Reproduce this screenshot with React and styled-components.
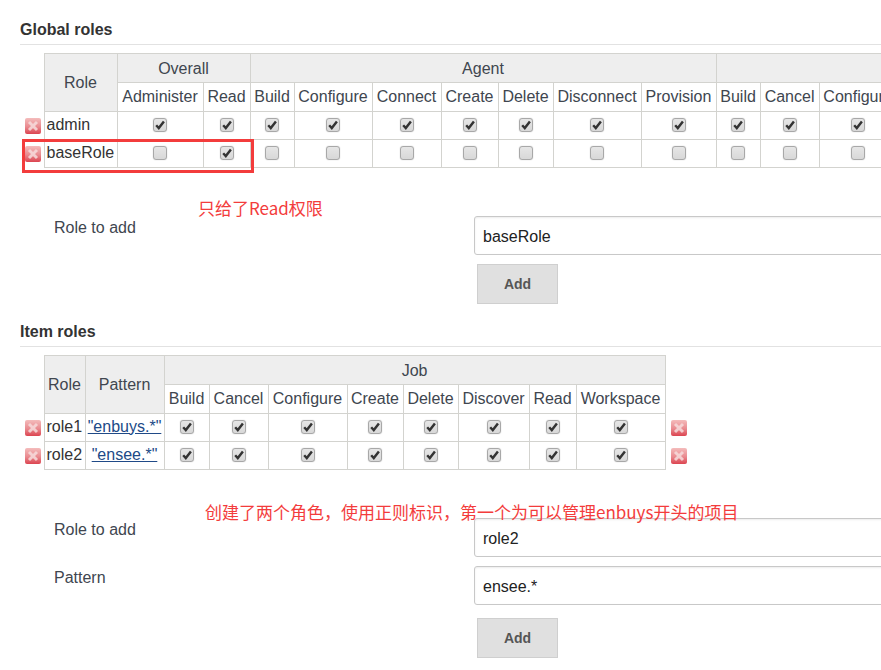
import React from 'react'
import styled, { createGlobalStyle } from 'styled-components'

const GlobalStyle = createGlobalStyle`
  html, body {
    margin: 0;
    padding: 0;
    background: #fff;
  }
`

const Page = styled.div`
  position: relative;
  width: 881px;
  height: 670px;
  overflow: hidden;
  box-sizing: border-box;
  padding: 20px 0 0 20px;
  color: #333;
  font-family: "Liberation Sans", Arial, sans-serif;
  font-size: 16px;
`

const SectionTitle = styled.h2`
  margin: 0 0 8px;
  width: 861px;
  height: 23px;
  padding: 1px 0 0;
  border-bottom: 1px solid #e2e2e2;
  font-size: 16px;
  line-height: 18px;
  font-weight: bold;
`

const Table = styled.table`
  border-collapse: collapse;
  table-layout: fixed;
  width: ${(p) => p.$width}px;
  font-size: 16px;
`

const Col = styled.col`
  width: ${(p) => p.$w}px;
`

const HeadCell = styled.th`
  height: ${(p) => (p.$group ? 26 : 28)}px;
  padding: ${(p) => (p.$group ? '2px 0 0' : 0)};
  border: 1px solid #d3d3cf;
  background: ${(p) => (p.$plain ? '#fff' : '#eeeeee')};
  color: #40464f;
  font-weight: normal;
  text-align: center;
  white-space: nowrap;
  overflow: hidden;
`

const Cell = styled.td`
  height: 25px;
  padding: 0 0 2px;
  border: 1px solid #d3d3cf;
  text-align: center;
  white-space: nowrap;
  overflow: hidden;
`

const NameCell = styled(Cell)`
  text-align: left;
  padding-left: 2px;
`

const IconCell = styled.td`
  padding: 0;
  border: none;
  text-align: left;
  line-height: 0;
`

const BlankCell = styled.th`
  padding: 0;
  border: none;
`

const PatternLink = styled.a`
  color: #204a87;
  text-decoration: underline;
`

const DeleteIconBox = styled.svg`
  display: inline-block;
  width: 16px;
  height: 16px;
  margin: 1px 0 0 5px;
`

const CheckBox = styled.span`
  display: inline-flex;
  align-items: center;
  justify-content: center;
  vertical-align: middle;
  box-sizing: border-box;
  width: 14px;
  height: 14px;
  border: 1px solid #a8a8a8;
  border-radius: 3px;
  background: linear-gradient(#e6e6e6, #d8d8d8);
  box-shadow: 0 0 1px #aaa;
`

const Form = styled.div`
  display: grid;
  grid-template-columns: 454px 500px;
  row-gap: 9px;
  margin-top: 48px;
`

const Label = styled.div`
  padding: 3px 0 0 34px;
  line-height: 18px;
  color: #40464f;
`

const Input = styled.input`
  box-sizing: border-box;
  width: 500px;
  height: 39px;
  padding: 2px 8px 0;
  border: 1px solid #c8c8c8;
  border-radius: 3px;
  box-shadow: inset 0 1px 2px rgba(0, 0, 0, 0.08);
  color: #222;
  font-family: inherit;
  font-size: 16px;
  outline: none;
`

const AddButton = styled.button`
  grid-column: 2;
  width: 81px;
  height: 40px;
  margin: ${(p) => p.$push || 0}px 0 0 3px;
  border: 1px solid #cfcfcf;
  background: #e0e0e0;
  color: #555;
  font-family: inherit;
  font-size: 14px;
  font-weight: bold;
`

const Section = styled.section`
  margin-top: 18px;
`

const Highlight = styled.div`
  position: absolute;
  left: 22px;
  top: 139px;
  width: 232px;
  height: 34px;
  box-sizing: border-box;
  border: 3px solid #f33c3c;
`

const Note = styled.div`
  position: absolute;
  left: ${(p) => p.$x}px;
  top: ${(p) => p.$y}px;
  color: #f33c3c;
  font-family: "Noto Sans CJK SC", "Liberation Sans", sans-serif;
  font-size: 17px;
  line-height: 22px;
  white-space: nowrap;
`

const DeleteIcon = () => (
  <DeleteIconBox viewBox="0 0 16 16">
    <defs>
      <linearGradient id="del" x1="0" y1="0" x2="0" y2="1">
        <stop offset="0" stopColor="#f4bcbc" />
        <stop offset="0.55" stopColor="#e98a8f" />
        <stop offset="1" stopColor="#dc4450" />
      </linearGradient>
    </defs>
    <rect x="0" y="0" width="16" height="16" rx="2" fill="url(#del)" />
    <path d="M4 4l8 8M12 4l-8 8" stroke="#f7dcdc" strokeWidth="3" opacity="0.85" />
  </DeleteIconBox>
)

const Check = ({ on = true }) => (
  <CheckBox>
    {on && (
      <svg width="10" height="10" viewBox="0 0 10 10">
        <path d="M1.2 5.2l2.6 2.9L8.9 1.4" fill="none" stroke="#333" strokeWidth="2.4" />
      </svg>
    )}
  </CheckBox>
)

const globalCols = [24, 73, 86, 47, 44, 78, 69, 57, 55, 88, 75, 44, 59, 78]
const globalPerms = ['Administer', 'Read', 'Build', 'Configure', 'Connect', 'Create', 'Delete', 'Disconnect', 'Provision', 'Build', 'Cancel', 'Configure']
const baseRoleChecks = globalPerms.map((_, i) => i === 1)

const itemCols = [24, 41, 79, 45, 59, 79, 56, 55, 71, 47, 89, 24]
const itemPerms = ['Build', 'Cancel', 'Configure', 'Create', 'Delete', 'Discover', 'Read', 'Workspace']
const itemRoles = [
  { name: 'role1', pattern: '"enbuys.*"' },
  { name: 'role2', pattern: '"ensee.*"' }
]

const sum = (list) => list.reduce((a, b) => a + b, 0)

export default function App() {
  return (
    <Page>
      <GlobalStyle />

      <SectionTitle>Global roles</SectionTitle>
      <Table $width={sum(globalCols)}>
        <colgroup>
          {globalCols.map((w, i) => <Col key={i} $w={w} />)}
        </colgroup>
        <thead>
          <tr>
            <BlankCell rowSpan={2} />
            <HeadCell rowSpan={2}>Role</HeadCell>
            <HeadCell $group colSpan={2}>Overall</HeadCell>
            <HeadCell $group colSpan={7}>Agent</HeadCell>
            <HeadCell $group colSpan={3} />
          </tr>
          <tr>
            {globalPerms.map((p, i) => <HeadCell key={i} $plain>{p}</HeadCell>)}
          </tr>
        </thead>
        <tbody>
          <tr>
            <IconCell><DeleteIcon /></IconCell>
            <NameCell>admin</NameCell>
            {globalPerms.map((_, i) => <Cell key={i}><Check /></Cell>)}
          </tr>
          <tr>
            <IconCell><DeleteIcon /></IconCell>
            <NameCell>baseRole</NameCell>
            {baseRoleChecks.map((on, i) => <Cell key={i}><Check on={on} /></Cell>)}
          </tr>
        </tbody>
      </Table>

      <Form>
        <Label>Role to add</Label>
        <Input defaultValue="baseRole" />
        <AddButton>Add</AddButton>
      </Form>

      <Section>
        <SectionTitle>Item roles</SectionTitle>
        <Table $width={sum(itemCols)}>
          <colgroup>
            {itemCols.map((w, i) => <Col key={i} $w={w} />)}
          </colgroup>
          <thead>
            <tr>
              <BlankCell rowSpan={2} />
              <HeadCell rowSpan={2}>Role</HeadCell>
              <HeadCell rowSpan={2}>Pattern</HeadCell>
              <HeadCell $group colSpan={8}>Job</HeadCell>
              <BlankCell rowSpan={2} />
            </tr>
            <tr>
              {itemPerms.map((p) => <HeadCell key={p} $plain>{p}</HeadCell>)}
            </tr>
          </thead>
          <tbody>
            {itemRoles.map((r) => (
              <tr key={r.name}>
                <IconCell><DeleteIcon /></IconCell>
                <NameCell>{r.name}</NameCell>
                <Cell><PatternLink href="#">{r.pattern}</PatternLink></Cell>
                {itemPerms.map((p) => <Cell key={p}><Check /></Cell>)}
                <IconCell><DeleteIcon /></IconCell>
              </tr>
            ))}
          </tbody>
        </Table>

        <Form>
          <Label>Role to add</Label>
          <Input defaultValue="role2" />
          <Label>Pattern</Label>
          <Input defaultValue="ensee.*" />
          <AddButton $push={4}>Add</AddButton>
        </Form>
      </Section>

      <Highlight />
      <Note $x={198} $y={197}>只给了Read权限</Note>
      <Note $x={205} $y={501}>创建了两个角色，使用正则标识，第一个为可以管理enbuys开头的项目</Note>
    </Page>
  )
}
